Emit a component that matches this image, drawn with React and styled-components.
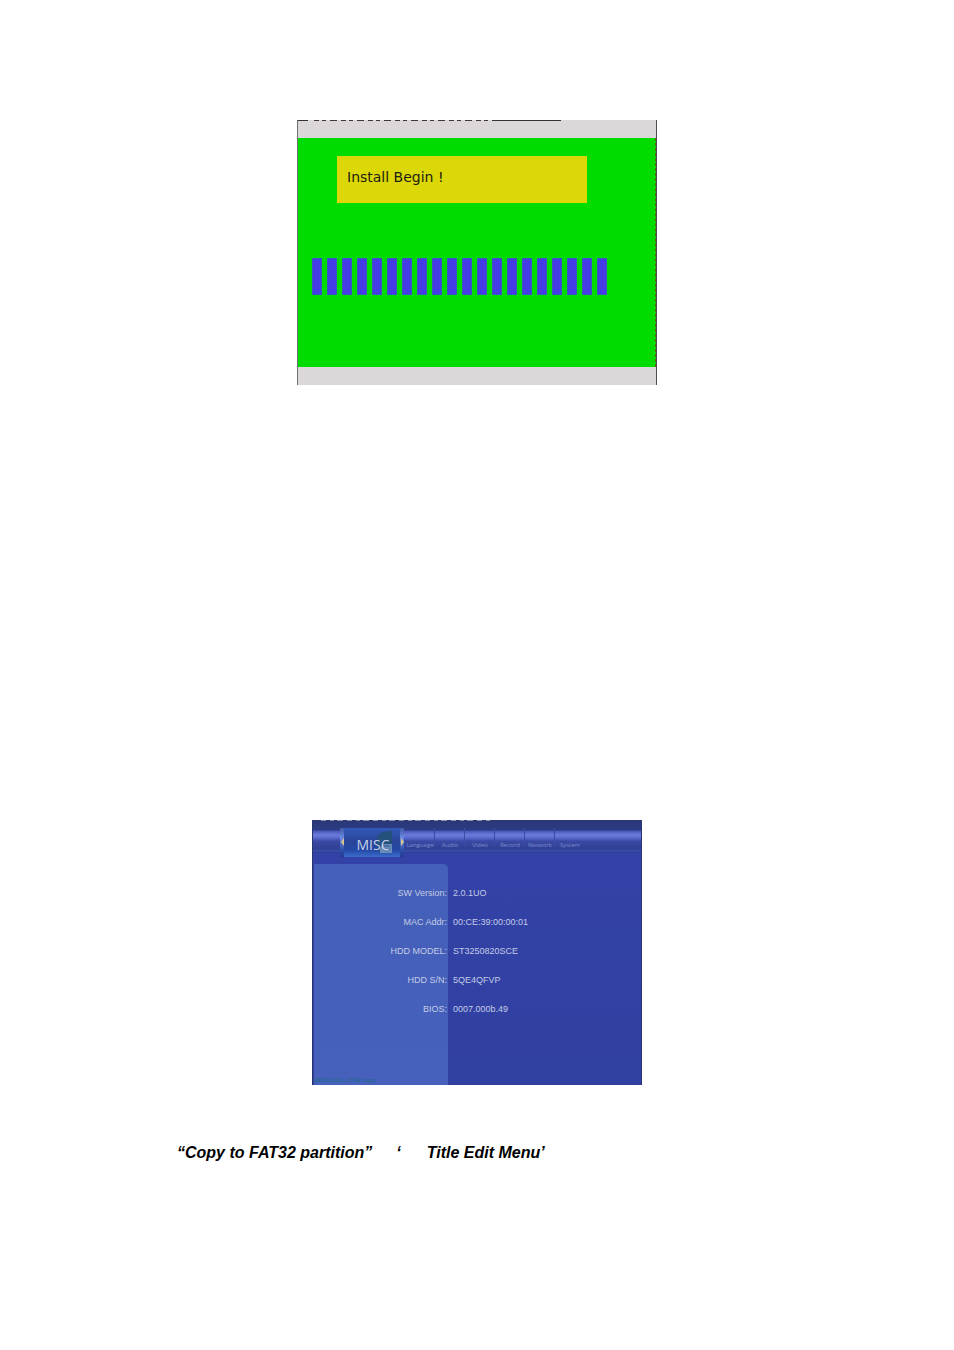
import React from "react";
import styled, { createGlobalStyle } from "styled-components";

const GlobalStyle = createGlobalStyle`
  * { box-sizing: border-box; }
  body { margin: 0; background: #fff; font-family: "Liberation Sans", Arial, sans-serif; }
`;

const Page = styled.main`
  display: flex;
  flex-direction: column;
  align-items: center;
  min-height: 100vh;
  padding: 120px 24px 0;
`;

const InstallScreen = styled.section`
  position: relative;
  width: 100%;
  max-width: 360px;
  padding: 18px 0;
  background: #dcd8da;
  border-left: 1px solid #6c726c;
  border-right: 1px solid #505050;
`;

const InstallBody = styled.div`
  display: flex;
  flex-direction: column;
  gap: 55px;
  padding: 18px 14px 72px;
  background: #00dc00;
  border-right: 1px dashed #5c6400;
`;

const Notice = styled.p`
  width: 250px;
  height: 47px;
  margin: 0 0 0 25px;
  padding: 12px 10px;
  background: #dcd808;
  color: #1c2010;
  font: 14px/18px "DejaVu Sans", sans-serif;
`;

const Progress = styled.div`
  display: flex;
  gap: 5px;
`;

const Block = styled.span`
  width: 10px;
  height: 37px;
  background: #463ce6;
  outline: 1px dotted #2c70a0;
  outline-offset: -1px;
`;

const NoiseLine = styled.svg`
  position: absolute;
  top: 0;
  left: 0;
  width: 264px;
  height: 1px;
`;

const MiscScreen = styled.section`
  position: relative;
  display: flex;
  flex-direction: column;
  width: 100%;
  max-width: 330px;
  height: 265px;
  margin-top: 435px;
  background: linear-gradient(#3442a8, #3040a0);
  border-left: 1px solid #28346c;
  border-right: 1px solid #2c3478;
`;

const TabBar = styled.nav`
  display: flex;
  align-items: flex-start;
  height: 33px;
  padding: 8px 0 0 27px;
  background: linear-gradient(
    #2a3878 0, #2c3a82 10px, #4858b8 11px, #6c7cdc 15px, #5868cc 18px,
    #3a4aa4 21px, #303e94 29px, #3850ac 31px, #2c3890 33px
  );
`;

const ActiveTab = styled.button`
  position: relative;
  display: flex;
  flex: none;
  align-items: center;
  justify-content: center;
  width: 64px;
  height: 29px;
  margin-right: 1px;
  padding: 4px 0 0 2px;
  border: 0;
  background:
    linear-gradient(#4058a8, #6c8ce4 10px, #3050a8 22px, #243c90) left / 4px 100% no-repeat,
    linear-gradient(#4058a8, #6c8ce4 10px, #3050a8 22px, #243c90) right / 4px 100% no-repeat,
    linear-gradient(#3458b8 0, #284498 14px, #2448a4 22px, #3868c8 28px);
  color: #c8d0ec;
  font: 14px/20px "Open Sans", sans-serif;
`;

const TabIcon = styled.svg`
  position: absolute;
  inset: 0;
  width: 64px;
  height: 29px;
`;

const TabLabel = styled.span`
  position: relative;
`;

const Tab = styled.button`
  flex: none;
  width: 30px;
  height: 24px;
  padding: 10px 0 0;
  border: 0;
  background: linear-gradient(#3c4ca4, #3c4ca4) right top / ${(p) => (p.$last ? "0" : "1px")} 19px no-repeat;
  color: #7c8cc8;
  font: 6px/12px "Open Sans", sans-serif;
  text-align: center;
`;

const InfoArea = styled.div`
  position: relative;
  flex: 1;
  display: flex;
  padding: 11px 0 0 1px;
`;

const LabelPanel = styled.div`
  position: absolute;
  inset: 11px auto 0 1px;
  width: 134px;
  border-top-right-radius: 5px;
  background: linear-gradient(#4460b8, #4660bc);
`;

const InfoTable = styled.table`
  position: relative;
  align-self: flex-start;
  width: 100%;
  margin-top: 15px;
  table-layout: fixed;
  border-collapse: collapse;
  color: #c4cce6;
  font-size: 9px;
  line-height: 13px;

  th, td { height: 29px; padding: 0; vertical-align: middle; }
  th { width: 134px; padding-right: 1px; font-weight: 400; text-align: right; }
  td { padding-left: 5px; }
`;

const Watermark = styled.small`
  position: absolute;
  left: 1px;
  bottom: 0;
  color: #146c80;
  font: 6px/8px "Liberation Mono", monospace;
`;

const Note = styled.p`
  display: flex;
  align-self: flex-start;
  margin: 58px 0 0 153px;
  font-size: 16px;
  line-height: 20px;
  font-style: italic;
  font-weight: 700;
  color: #000;
`;

const Quote = styled.span`
  margin: 0 26px 0 24px;
`;

const tabs = ["Language", "Audio", "Video", "Record", "Network", "System"];
const info = [
  ["SW Version:", "2.0.1UO"],
  ["MAC Addr:", "00:CE:39:00:00:01"],
  ["HDD MODEL:", "ST3250820SCE"],
  ["HDD S/N:", "5QE4QFVP"],
  ["BIOS:", "0007.000b.49"],
];

export default function App() {
  return (
    <>
      <GlobalStyle />
      <Page>
        <InstallScreen>
          <NoiseLine viewBox="0 0 264 1" aria-hidden="true">
            <path d="M0 .5H10M195 .5H263" stroke="#333" />
            <path d="M16 .5H195" stroke="#403838" strokeDasharray="5 3 4 4 7 4" />
          </NoiseLine>
          <InstallBody>
            <Notice>Install Begin !</Notice>
            <Progress role="progressbar" aria-label="Install progress">
              {Array.from({ length: 20 }, (_, i) => <Block key={i} />)}
            </Progress>
          </InstallBody>
        </InstallScreen>

        <MiscScreen>
          <NoiseLine viewBox="0 0 264 1" aria-hidden="true">
            <path d="M8 .5H180" stroke="#8c90ac" strokeDasharray="5 4 4 3 6 4" />
          </NoiseLine>
          <TabBar>
            <ActiveTab>
              <TabIcon viewBox="0 0 64 29" aria-hidden="true">
                <path d="M37 9Q40 3 50 3H52V25H40Q36 18 37 9Z" fill="#24507c" />
                <path d="M43 16H52V25H40V20Z" fill="#688cb8" />
                <path d="M44 18H50M43 21H50" stroke="#305890" />
                <path d="M4 10L1 14L4 18ZM61 10L64 14L61 18Z" fill="#d8c890" />
              </TabIcon>
              <TabLabel>MISC</TabLabel>
            </ActiveTab>
            {tabs.map((t, i) => <Tab key={t} $last={i === tabs.length - 1}>{t}</Tab>)}
          </TabBar>
          <InfoArea>
            <LabelPanel />
            <InfoTable>
              <tbody>
                {info.map(([k, v]) => (
                  <tr key={k}><th scope="row">{k}</th><td>{v}</td></tr>
                ))}
              </tbody>
            </InfoTable>
            <Watermark>20071221_1740.mpg</Watermark>
          </InfoArea>
        </MiscScreen>

        <Note>
          <span>“Copy to FAT32 partition”</span>
          <Quote>‘</Quote>
          <span>Title Edit Menu’</span>
        </Note>
      </Page>
    </>
  );
}
